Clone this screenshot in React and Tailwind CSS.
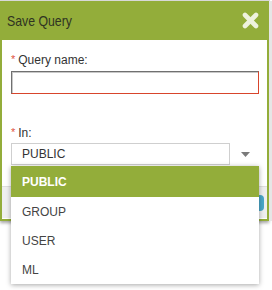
import React from "react";

const GREEN = "bg-[#93ad3a]";

export default function App() {
  return (
    <div className="relative w-[272px] h-[290px] overflow-hidden bg-white font-['Liberation_Sans',Arial,sans-serif]">
      <div className="h-px w-[270px] bg-[#dcdcdc]" />
      <div className="flex">
        <div className="w-[269px] border-x-2 border-b-2 border-[#93ad3a] shadow-[0_2px_3px_rgba(0,0,0,0.35)]">
          {/* Header */}
          <div className={`${GREEN} h-[39px] -mx-[2px] flex items-center justify-between pl-[7px] pr-[10px]`}>
            <span className="text-[15px] text-[#2f3322] origin-left scale-x-[0.82] inline-block leading-none">
              Save Query
            </span>
            <svg width="17" height="17" viewBox="0 0 17 17" className="mb-[1px]">
              <g stroke="#eef2dc" strokeWidth="4.6" strokeLinecap="round">
                <line x1="3" y1="3" x2="14" y2="14" />
                <line x1="14" y1="3" x2="3" y2="14" />
              </g>
            </svg>
          </div>
          {/* Body */}
          <div className="bg-white h-[146px] pt-[13px] pl-[9px] pr-[8px]">
            <div className="flex items-start text-[12px] leading-[14px] text-[#333]">
              <span className="text-[#e0523f] text-[11px] leading-[12px] mr-[3px]">*</span>
              <span>Query name:</span>
            </div>
            <div className="mt-[4px] h-[23px] w-[248px] border border-t-[#707070] border-l-[#707070] border-r-[#d8452c] border-b-[#d8452c] shadow-[inset_1px_1px_0_#c8c8c8]" />
            <div className="mt-[32px] flex items-start text-[12px] leading-[14px] text-[#333]">
              <span className="text-[#e0523f] text-[11px] leading-[12px] mr-[3px]">*</span>
              <span>In:</span>
            </div>
            <div className="mt-[3px] flex items-center">
              <div className="h-[22px] w-[219px] border border-[#cfcfcf] flex items-center pl-[10px] text-[12px] text-[#333]">
                PUBLIC
              </div>
              <svg width="9" height="5" viewBox="0 0 9 5" className="ml-[11px]">
                <polygon points="0,0 9,0 4.5,5" fill="#7a7a7a" />
              </svg>
            </div>
          </div>
          {/* Footer */}
          <div className="h-[32px] bg-[#efefef] border-t border-[#dedede] flex items-center justify-end pr-[3px]">
            <div className="h-[16px] w-[40px] rounded-[4px] bg-[#4aa7c9]" />
          </div>
        </div>
        <div className="w-[3px] h-[220px] bg-[#e6e6e6]" />
      </div>

      {/* Dropdown menu (overlay) */}
      <div className="absolute left-[11px] top-[166px] w-[248px] bg-white border-t border-[#93ad3a] shadow-[0_1px_5px_rgba(0,0,0,0.35)]">
        <div className={`${GREEN} h-[30px] flex items-center pl-[11px] text-[12px] font-bold text-white`}>
          PUBLIC
        </div>
        <div className="h-[29px] flex items-center pl-[11px] text-[12px] text-[#444]">GROUP</div>
        <div className="h-[29px] flex items-center pl-[11px] text-[12px] text-[#444]">USER</div>
        <div className="h-[29px] flex items-center pl-[11px] text-[12px] text-[#444]">ML</div>
      </div>
    </div>
  );
}
